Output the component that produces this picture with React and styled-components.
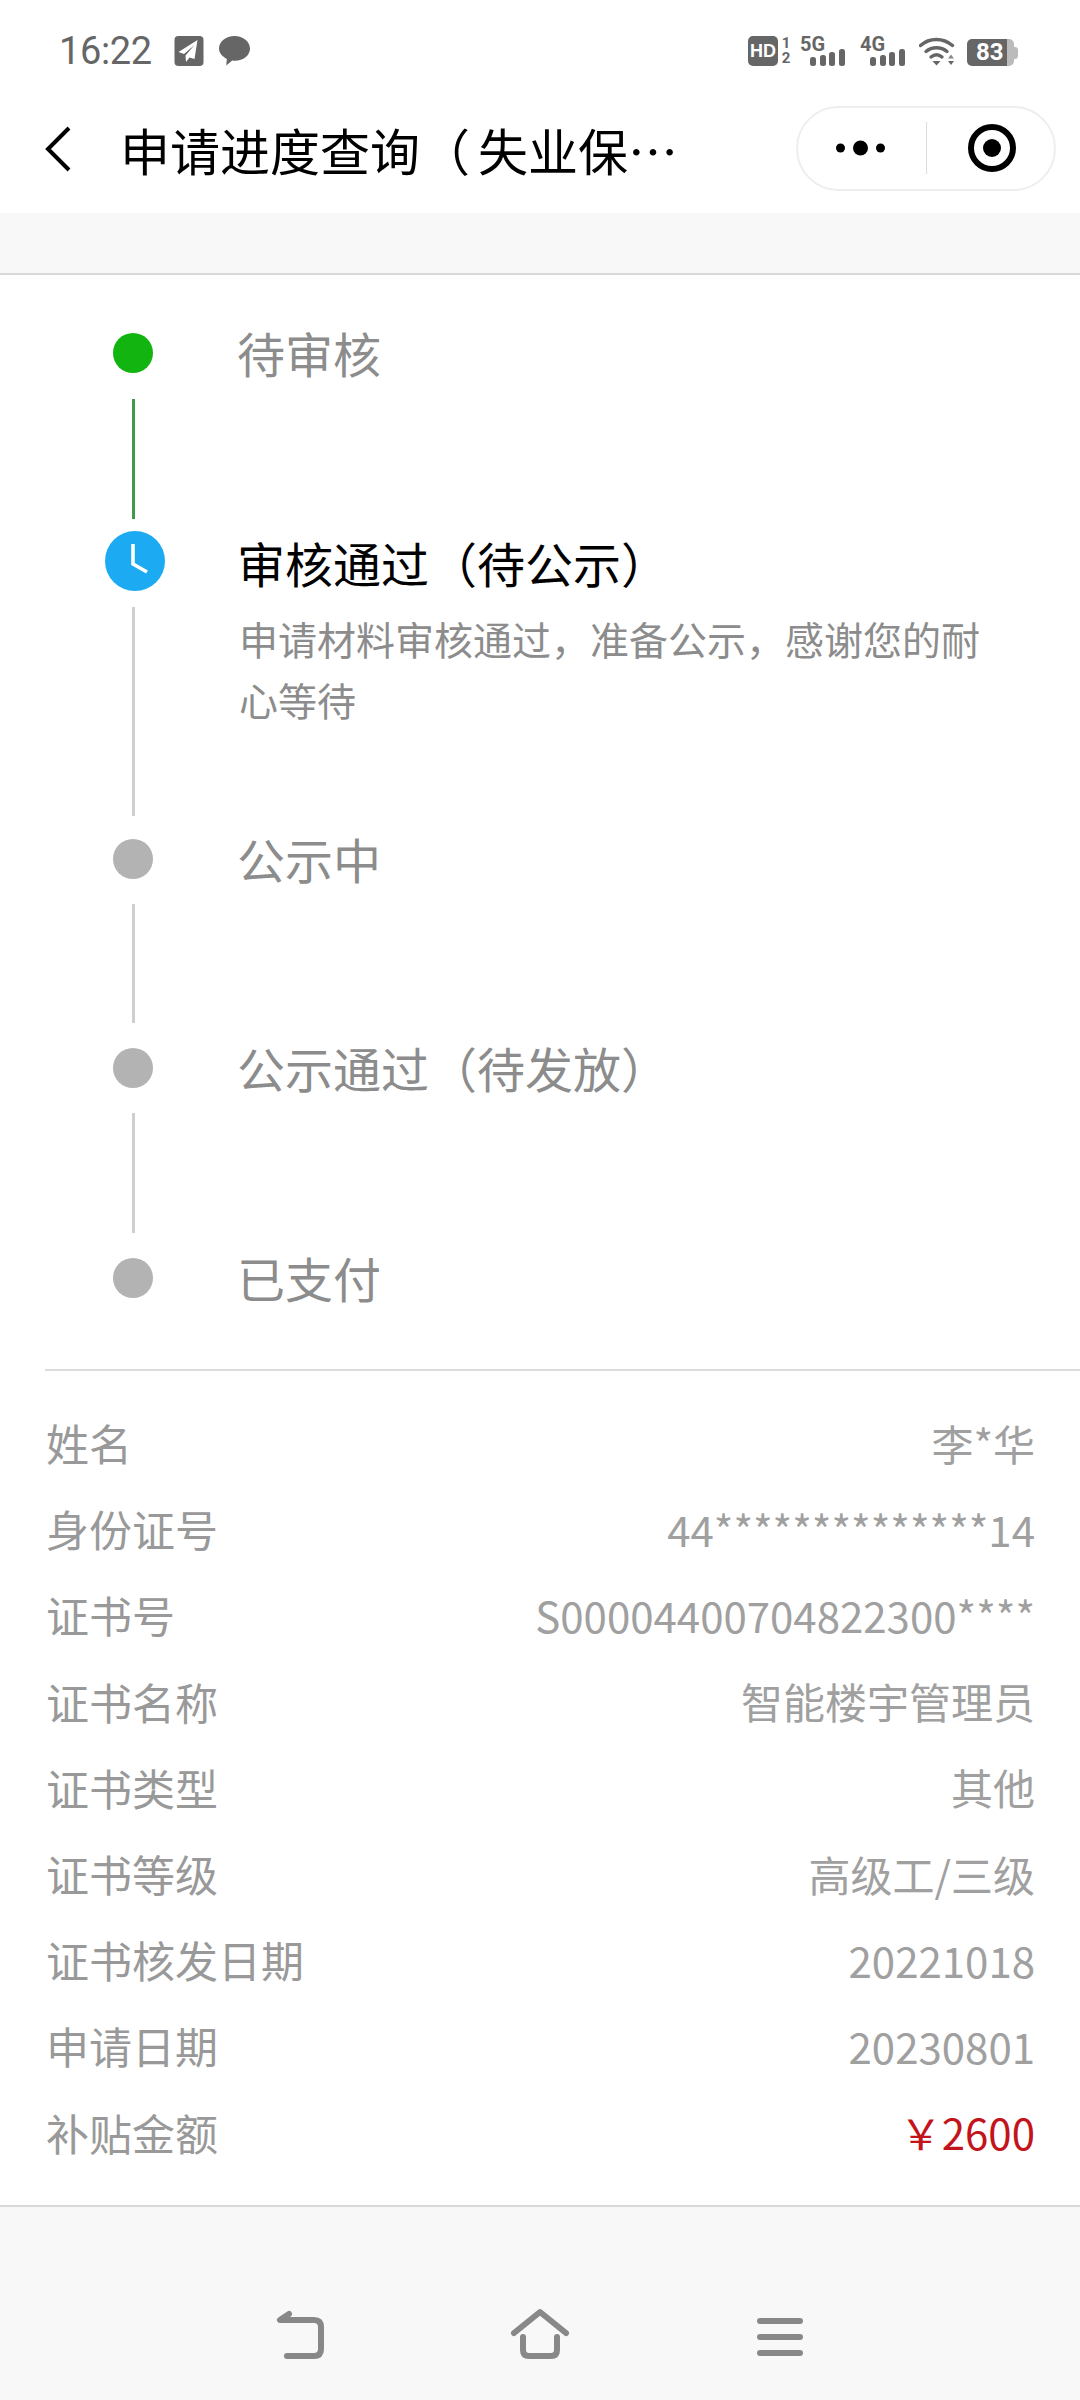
import React from 'react'
import styled, { createGlobalStyle } from 'styled-components'

const steps = [
	{ key: 'a', title: '待审核', state: 'done', after: 26, line: 120, tail: 12, shift: 3 },
	{
		key: 'b',
		title: '审核通过（待公示）',
		detail: '申请材料审核通过，准备公示，感谢您的耐心等待',
		state: 'current',
		after: 16,
		line: 209,
		tail: 23,
		shift: 15,
	},
	{ key: 'c', title: '公示中', state: 'todo', after: 25, line: 119, tail: 25, shift: 3 },
	{ key: 'd', title: '公示通过（待发放）', state: 'todo', after: 25, line: 120, tail: 25, shift: 3 },
	{ key: 'e', title: '已支付', state: 'todo', shift: 3 },
]

const rows = [
	{ label: '姓名', value: '李*华' },
	{ label: '身份证号', value: '44**************14' },
	{ label: '证书号', value: 'S00004400704822300****' },
	{ label: '证书名称', value: '智能楼宇管理员' },
	{ label: '证书类型', value: '其他' },
	{ label: '证书等级', value: '高级工/三级' },
	{ label: '证书核发日期', value: '20221018' },
	{ label: '申请日期', value: '20230801' },
	{ label: '补贴金额', value: '￥2600', money: true },
]

const Bars = () => (
	<svg width="36" height="17" viewBox="0 0 36 17">
		<rect x="0" y="8" width="6" height="9" rx="2.5" fill="#666" />
		<rect x="10" y="6" width="6" height="11" rx="2.5" fill="#666" />
		<rect x="19" y="3" width="6" height="14" rx="2.5" fill="#666" />
		<rect x="29" y="0" width="6" height="17" rx="2.5" fill="#666" />
	</svg>
)

const App = () => (
	<Page>
		<GlobalStyle />
		<StatusBar>
			<Time>16:22</Time>
			<svg width="30" height="30" viewBox="0 0 29 30">
				<rect width="29" height="30" rx="4" fill="#666" />
				<path d="M23 4 L4 16 L9.5 18 L20 9 L11 19.5 L11.5 26 L15 21.5 L20 23 Z" fill="#fff" />
			</svg>
			<BubbleIcon width="31" height="30" viewBox="0 0 30 29">
				<path d="M15 0 C23.5 0 30 5.4 30 12.2 C30 19 23.5 24 15.5 24 C14.6 24 13.7 24 12.8 23.8 L7 28.5 L7.6 22.2 C3 20 0 16.4 0 12.2 C0 5.4 6.5 0 15 0 Z" fill="#666" />
			</BubbleIcon>
			<StatusRight>
				<HdBadge>HD</HdBadge>
				<SimSlots>
					<span>1</span>
					<span>2</span>
				</SimSlots>
				<Signal $gap={8}>
					<NetLabel>5G</NetLabel>
					<Bars />
				</Signal>
				<Signal $gap={14}>
					<NetLabel>4G</NetLabel>
					<Bars />
				</Signal>
				<WifiIcon width="37" height="30" viewBox="0 0 37 30">
					<path d="M1.5 9.5 C10.5 1.5 24 1.5 33.5 9.5" fill="none" stroke="#666" strokeWidth="3.4" strokeLinecap="round" />
					<path d="M7 15.5 C13 10.5 22 10.5 28 15.5" fill="none" stroke="#666" strokeWidth="3.4" strokeLinecap="round" />
					<path d="M12 21 C15.5 18 19.5 18 23 21" fill="none" stroke="#666" strokeWidth="3.4" strokeLinecap="round" />
					<path d="M13.5 25 H21.5 L17.5 29.5 Z" fill="#666" />
					<path d="M32 18.5 L35 22.5 H29 Z" fill="#888" />
					<path d="M29 25 H35 L32 29 Z" fill="#666" />
				</WifiIcon>
				<Battery>
					<BatteryBody>83</BatteryBody>
					<BatteryCap />
				</Battery>
			</StatusRight>
		</StatusBar>

		<NavBar>
			<svg width="28" height="48" viewBox="0 0 28 48">
				<path d="M25 3 L4 24 L25 45" fill="none" stroke="#000" strokeWidth="4" />
			</svg>
			<NavTitle>
				申请进度查询<TitleParen>（</TitleParen>失业保…
			</NavTitle>
			<Capsule>
				<CapsuleSide>
					<svg width="52" height="16" viewBox="0 0 52 16">
						<circle cx="4.5" cy="8" r="4.5" fill="#000" />
						<circle cx="24.5" cy="8" r="7.5" fill="#000" />
						<circle cx="44.5" cy="8" r="4.5" fill="#000" />
					</svg>
				</CapsuleSide>
				<CapsuleDivider />
				<CapsuleSide>
					<TargetIcon width="50" height="50" viewBox="0 0 50 50">
						<circle cx="25" cy="25" r="21" fill="none" stroke="#000" strokeWidth="6" />
						<circle cx="25" cy="25" r="9" fill="#000" />
					</TargetIcon>
				</CapsuleSide>
			</Capsule>
		</NavBar>

		<Band />

		<Timeline>
			{steps.map((step) => (
				<Step key={step.key}>
					<Rail>
						{step.state === 'current' ? (
							<ClockDot>
								<svg width="60" height="60" viewBox="0 0 60 60">
									<circle cx="30" cy="30" r="30" fill="#1cabf2" />
									<path d="M28 13 V33 L42 41" fill="none" stroke="#fff" strokeWidth="3.6" />
								</svg>
							</ClockDot>
						) : (
							<Dot $state={step.state} />
						)}
						{step.line && (
							<Connector
								$done={step.state === 'done'}
								$after={step.after}
								$line={step.line}
								$tail={step.tail}
							/>
						)}
					</Rail>
					<StepBody $shift={step.shift}>
						<StepTitle $current={step.state === 'current'}>{step.title}</StepTitle>
						{step.detail && <StepDetail>{step.detail}</StepDetail>}
					</StepBody>
				</Step>
			))}
		</Timeline>

		<InfoList>
			{rows.map(({ label, value, money }) => (
				<InfoRow key={label}>
					<InfoLabel>{label}</InfoLabel>
					<InfoValue $money={money}>{value}</InfoValue>
				</InfoRow>
			))}
		</InfoList>

		<Footer>
			<svg width="60" height="60" viewBox="0 0 60 60">
				<path d="M19 8 L10 14 H44 Q51 14 51 21 V43 Q51 50 44 50 H17" fill="none" stroke="#888" strokeWidth="6" strokeLinecap="round" strokeLinejoin="round" />
			</svg>
			<svg width="60" height="60" viewBox="0 0 60 60">
				<path d="M4 27 L30 6 L56 27" fill="none" stroke="#888" strokeWidth="6" strokeLinecap="round" strokeLinejoin="round" />
				<path d="M13 31 V44 Q13 50 19 50 H41 Q47 50 47 44 V31" fill="none" stroke="#888" strokeWidth="6" strokeLinecap="round" />
			</svg>
			<svg width="60" height="60" viewBox="0 0 60 60">
				<path d="M10 15 H50 M10 31 H50 M10 47 H50" fill="none" stroke="#888" strokeWidth="6" strokeLinecap="round" />
			</svg>
		</Footer>
	</Page>
)

const GlobalStyle = createGlobalStyle`
	html, body {
		margin: 0;
		padding: 0;
		background: #f8f8f8;
	}
	body {
		font-family: "Noto Sans CJK SC", "Noto Sans", sans-serif;
	}
`

const Page = styled.div`
	width: 1080px;
	height: 2400px;
	display: flex;
	flex-direction: column;
	background: #fff;
	overflow: hidden;
`

const StatusBar = styled.div`
	height: 90px;
	box-sizing: border-box;
	padding: 36px 62px 0 59px;
	display: flex;
	align-items: flex-start;
	flex-shrink: 0;
`

const Time = styled.div`
	font-family: Roboto, sans-serif;
	font-size: 38px;
	line-height: 30px;
	letter-spacing: -0.4px;
	color: #666;
	margin-right: 22px;
`

const BubbleIcon = styled.svg`
	margin-left: 15px;
`

const StatusRight = styled.div`
	margin-left: auto;
	display: flex;
	align-items: flex-start;
`

const HdBadge = styled.div`
	width: 30px;
	height: 30px;
	border-radius: 5px;
	background: #666;
	color: #fff;
	font-family: "Liberation Sans", sans-serif;
	font-weight: 700;
	font-size: 18px;
	line-height: 30px;
	text-align: center;
`

const SimSlots = styled.div`
	width: 12px;
	margin-left: 2px;
	display: flex;
	flex-direction: column;
	align-items: center;
	font-family: Roboto, sans-serif;
	font-weight: 700;
	font-size: 15px;
	line-height: 15px;
	color: #666;
`

const Signal = styled.div`
	width: 46px;
	height: 30px;
	margin-left: ${(p) => p.$gap}px;
	display: flex;
	flex-direction: column;
	align-items: flex-end;
	position: relative;
	svg {
		position: absolute;
		right: 0;
		bottom: 0;
	}
`

const NetLabel = styled.span`
	align-self: flex-start;
	font-family: Roboto, sans-serif;
	font-weight: 700;
	font-size: 20px;
	line-height: 16px;
	color: #666;
`

const WifiIcon = styled.svg`
	margin-left: 13px;
`

const Battery = styled.div`
	margin-left: 11px;
	margin-top: 3px;
	display: flex;
	align-items: center;
`

const BatteryBody = styled.div`
	width: 47px;
	height: 27px;
	border-radius: 5px;
	background: linear-gradient(to right, #666 0 40px, #bbb 40px);
	color: #fff;
	font-family: Roboto, sans-serif;
	font-weight: 700;
	font-size: 24px;
	line-height: 27px;
	padding-left: 9px;
	box-sizing: border-box;
`

const BatteryCap = styled.div`
	width: 4px;
	height: 12px;
	border-radius: 0 3px 3px 0;
	background: #bbb;
`

const NavBar = styled.div`
	height: 123px;
	box-sizing: border-box;
	padding: 0 24px 6px 44px;
	display: flex;
	align-items: center;
	flex-shrink: 0;
`

const NavTitle = styled.div`
	margin-left: 48px;
	font-size: 50px;
	line-height: 60px;
	color: #000;
	white-space: nowrap;
`

const TitleParen = styled.span`
	margin-right: 8px;
`

const Capsule = styled.div`
	margin-left: auto;
	margin-top: -1px;
	width: 260px;
	height: 85px;
	box-sizing: border-box;
	border: 2px solid #eee;
	border-radius: 43px;
	display: flex;
	align-items: center;
`

const CapsuleSide = styled.div`
	flex: 1;
	display: flex;
	align-items: center;
	justify-content: center;
`

const TargetIcon = styled.svg`
	margin-left: 3px;
`

const CapsuleDivider = styled.div`
	width: 1px;
	height: 52px;
	background: #ddd;
`

const Band = styled.div`
	height: 62px;
	flex-shrink: 0;
	box-sizing: border-box;
	background: #f8f8f8;
	border-bottom: 2px solid #d8d8d8;
`

const Timeline = styled.div`
	padding: 58px 0 71px 93px;
	display: flex;
	flex-direction: column;
	flex-shrink: 0;
`

const Step = styled.div`
	display: flex;
`

const Rail = styled.div`
	width: 80px;
	flex-shrink: 0;
	display: flex;
	flex-direction: column;
	align-items: center;
`

const Dot = styled.div`
	width: 40px;
	height: 40px;
	border-radius: 50%;
	background: ${(p) => (p.$state === 'done' ? '#12b40f' : '#b3b3b3')};
`

const ClockDot = styled.div`
	width: 60px;
	height: 60px;
	margin-left: 4px;
`

const Connector = styled.div`
	width: 3px;
	height: ${(p) => p.$line}px;
	margin-top: ${(p) => p.$after}px;
	margin-bottom: ${(p) => p.$tail}px;
	background: ${(p) => (p.$done ? '#45994a' : '#cfcfcf')};
`

const StepBody = styled.div`
	margin-left: 64px;
	padding-top: ${(p) => p.$shift}px;
`

const StepTitle = styled.div`
	font-size: 48px;
	line-height: 32px;
	color: ${(p) => (p.$current ? '#000' : '#8c8c8c')};
`

const StepDetail = styled.div`
	margin-top: 30px;
	margin-left: 2px;
	width: 770px;
	font-size: 39px;
	line-height: 61px;
	color: #8c8c8c;
`

const InfoList = styled.div`
	margin-left: 45px;
	border-top: 2px solid #dcdcdc;
	padding: 28px 45px 30px 1px;
	display: flex;
	flex-direction: column;
	flex-shrink: 0;
`

const InfoRow = styled.div`
	height: 86.2px;
	display: flex;
	align-items: center;
	justify-content: space-between;
`

const InfoLabel = styled.div`
	font-size: 43px;
	color: #999;
`

const InfoValue = styled.div`
	font-size: 42px;
	color: ${(p) => (p.$money ? '#c4141b' : '#a0a0a0')};
`

const Footer = styled.div`
	flex: 1;
	background: #f8f8f8;
	border-top: 2px solid #d8d8d8;
	display: flex;
	justify-content: center;
	gap: 180px;
	padding-top: 99px;
	box-sizing: border-box;
	svg {
		display: block;
	}
`

export default App
